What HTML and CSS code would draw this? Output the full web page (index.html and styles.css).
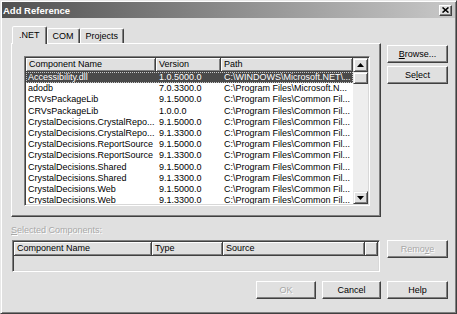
FILE: index.html
```html
<!DOCTYPE html>
<html lang="en">
<head>
  <meta charset="UTF-8">
  <title>Add Reference</title>
  <link rel="stylesheet" href="styles.css">
</head>
<body>
  <div class="window">
    <div class="titlebar">
      <span class="title">Add Reference</span>
      <div class="close">
        <svg width="7" height="6" viewBox="0 0 7 6"><path d="M0.5 0.5L6.5 5.5M6.5 0.5L0.5 5.5" stroke="#000" stroke-width="1.6"/></svg>
      </div>
    </div>

    <div class="content">
      <div class="tabs-area">
        <div class="tab-strip">
          <div class="tab active">.NET</div>
          <div class="tab">COM</div>
          <div class="tab">Projects</div>
        </div>
        <div class="tab-panel">
          <div class="listview">
            <div class="lv-main">
              <div class="lv-header">
                <div class="hcell c-name">Component Name</div>
                <div class="hcell c-ver">Version</div>
                <div class="hcell c-path">Path</div>
              </div>
              <div class="lv-row selected">
                <div class="cell c-name">Accessibility.dll</div>
                <div class="cell c-ver">1.0.5000.0</div>
                <div class="cell c-path">C:\WINDOWS\Microsoft.NET\...</div>
              </div>
              <div class="lv-row">
                <div class="cell c-name">adodb</div>
                <div class="cell c-ver">7.0.3300.0</div>
                <div class="cell c-path">C:\Program Files\Microsoft.N...</div>
              </div>
              <div class="lv-row">
                <div class="cell c-name">CRVsPackageLib</div>
                <div class="cell c-ver">9.1.5000.0</div>
                <div class="cell c-path">C:\Program Files\Common Fil...</div>
              </div>
              <div class="lv-row">
                <div class="cell c-name">CRVsPackageLib</div>
                <div class="cell c-ver">1.0.0.0</div>
                <div class="cell c-path">C:\Program Files\Common Fil...</div>
              </div>
              <div class="lv-row">
                <div class="cell c-name">CrystalDecisions.CrystalRepo...</div>
                <div class="cell c-ver">9.1.5000.0</div>
                <div class="cell c-path">C:\Program Files\Common Fil...</div>
              </div>
              <div class="lv-row">
                <div class="cell c-name">CrystalDecisions.CrystalRepo...</div>
                <div class="cell c-ver">9.1.3300.0</div>
                <div class="cell c-path">C:\Program Files\Common Fil...</div>
              </div>
              <div class="lv-row">
                <div class="cell c-name">CrystalDecisions.ReportSource</div>
                <div class="cell c-ver">9.1.5000.0</div>
                <div class="cell c-path">C:\Program Files\Common Fil...</div>
              </div>
              <div class="lv-row">
                <div class="cell c-name">CrystalDecisions.ReportSource</div>
                <div class="cell c-ver">9.1.3300.0</div>
                <div class="cell c-path">C:\Program Files\Common Fil...</div>
              </div>
              <div class="lv-row">
                <div class="cell c-name">CrystalDecisions.Shared</div>
                <div class="cell c-ver">9.1.5000.0</div>
                <div class="cell c-path">C:\Program Files\Common Fil...</div>
              </div>
              <div class="lv-row">
                <div class="cell c-name">CrystalDecisions.Shared</div>
                <div class="cell c-ver">9.1.3300.0</div>
                <div class="cell c-path">C:\Program Files\Common Fil...</div>
              </div>
              <div class="lv-row">
                <div class="cell c-name">CrystalDecisions.Web</div>
                <div class="cell c-ver">9.1.5000.0</div>
                <div class="cell c-path">C:\Program Files\Common Fil...</div>
              </div>
              <div class="lv-row">
                <div class="cell c-name">CrystalDecisions.Web</div>
                <div class="cell c-ver">9.1.3300.0</div>
                <div class="cell c-path">C:\Program Files\Common Fil...</div>
              </div>
            </div>
            <div class="scrollbar">
              <div class="sb-btn up">
                <svg width="7" height="4" viewBox="0 0 7 4"><path d="M3.5 0L7 4H0z" fill="#000"/></svg>
              </div>
              <div class="sb-thumb"></div>
              <div class="sb-track"></div>
              <div class="sb-btn down">
                <svg width="7" height="4" viewBox="0 0 7 4"><path d="M0 0H7L3.5 4z" fill="#000"/></svg>
              </div>
            </div>
          </div>
        </div>
      </div>

      <div class="side">
        <div class="btn"><u>B</u>rowse...</div>
        <div class="btn">Se<u>l</u>ect</div>
      </div>

      <div class="sel-label disabled"><u>S</u>elected Components:</div>

      <div class="sel-list">
        <div class="lv-header">
          <div class="hcell s-name">Component Name</div>
          <div class="hcell s-type">Type</div>
          <div class="hcell s-src">Source</div>
          <div class="hcell s-rest"></div>
        </div>
      </div>

      <div class="btn remove disabled">Remo<u>v</u>e</div>

      <div class="footer">
        <div class="btn ok disabled">OK</div>
        <div class="btn cancel">Cancel</div>
        <div class="btn help">Help</div>
      </div>
    </div>
  </div>
</body>
</html>
```

FILE: styles.css
```css
body {
  margin: 0;
  background: #e0e0e0;
  font-family: "Liberation Sans", Arial, sans-serif;
  font-size: 9px;
  color: #000;
}
.window {
  width: 457px;
  height: 314px;
  box-sizing: border-box;
  padding: 1px;
  background: #e0e0e0;
  border: 1px solid;
  border-color: #e8e8e8 #404040 #404040 #e8e8e8;
  box-shadow: inset 1px 1px #fff, inset -1px -1px #808080;
}
.titlebar {
  height: 16px;
  display: flex;
  align-items: center;
  justify-content: space-between;
  padding: 0 3px 0 1px;
  background: linear-gradient(to right, #505050, #c8c8c8);
  color: #fff;
  font-weight: bold;
  font-size: 9.5px;
}
.close {
  width: 13px;
  height: 11px;
  box-sizing: border-box;
  display: flex;
  align-items: center;
  justify-content: center;
  background: #e0e0e0;
  border: 1px solid;
  border-color: #fff #404040 #404040 #fff;
  box-shadow: inset -1px -1px #808080;
}
.content {
  display: grid;
  grid-template-columns: 370px 61px;
  column-gap: 6px;
  padding: 8px 0 0 9px;
}
.tab-strip {
  display: flex;
  align-items: flex-end;
  height: 17px;
  padding-left: 1px;
}
.tab {
  height: 15px;
  box-sizing: border-box;
  padding: 0 5px;
  display: flex;
  align-items: center;
  border: 1px solid;
  border-bottom: none;
  border-color: #fff #404040 transparent #fff;
  box-shadow: inset -1px 0 #808080;
  border-radius: 2px 2px 0 0;
}
.tab.active {
  height: 18px;
  margin-bottom: -1px;
  padding: 0 6px 2px;
  position: relative;
  z-index: 1;
  background: #e0e0e0;
}
.tab-panel {
  height: 174px;
  box-sizing: border-box;
  padding: 12px 10px 10px 12px;
  border: 1px solid;
  border-color: #fff #404040 #404040 #fff;
  box-shadow: inset -1px -1px #808080;
}
.listview {
  height: 150px;
  box-sizing: border-box;
  display: flex;
  padding: 1px;
  background: #fff;
  border: 1px solid;
  border-color: #808080 #fff #fff #808080;
  box-shadow: inset 1px 1px #404040, inset -1px -1px #d8d8d8;
}
.lv-main {
  flex: 1;
  overflow: hidden;
}
.lv-header {
  display: flex;
  height: 14px;
}
.hcell {
  box-sizing: border-box;
  height: 14px;
  padding-left: 3px;
  line-height: 12px;
  white-space: nowrap;
  overflow: hidden;
  background: #e0e0e0;
  border-right: 1px solid #404040;
  border-bottom: 1px solid #404040;
  box-shadow: inset 1px 1px #fff, inset -1px -1px #808080;
}
.c-name { width: 130px; }
.c-ver { width: 65px; }
.c-path { flex: 1; }
.lv-row {
  display: flex;
  height: 11.2px;
  line-height: 11px;
}
.cell {
  box-sizing: border-box;
  padding-left: 3px;
  white-space: nowrap;
  overflow: hidden;
}
.cell.c-name { padding-left: 2px; }
.lv-row.selected {
  background: #4a4a4a;
  color: #fff;
  outline: 1px dotted #c8c8c8;
  outline-offset: -1px;
}
.scrollbar {
  width: 15px;
  display: flex;
  flex-direction: column;
  background: #eeeeee;
}
.sb-btn,
.sb-thumb {
  box-sizing: border-box;
  background: #e0e0e0;
  border: 1px solid;
  border-color: #e8e8e8 #404040 #404040 #e8e8e8;
  box-shadow: inset 1px 1px #fff, inset -1px -1px #808080;
}
.sb-btn {
  height: 14px;
  display: flex;
  align-items: center;
  justify-content: center;
}
.sb-btn.down { height: 13px; }
.sb-thumb { height: 12px; }
.sb-track { flex: 1; }
.side {
  padding-top: 19px;
  display: flex;
  flex-direction: column;
  gap: 3px;
}
.btn {
  width: 61px;
  height: 18px;
  box-sizing: border-box;
  display: flex;
  align-items: center;
  justify-content: center;
  background: #e0e0e0;
  border: 1px solid;
  border-color: #fff #404040 #404040 #fff;
  box-shadow: inset -1px -1px #808080;
}
.disabled {
  color: #a8a8a8;
  text-shadow: 1px 1px #fff;
}
.sel-label {
  grid-column: 1;
  padding: 7px 0 4px 0;
  line-height: 12px;
}
.sel-list {
  grid-column: 1;
  height: 32px;
  margin: 0 1px;
  box-sizing: border-box;
  padding: 1px;
  border: 1px solid;
  border-color: #808080 #fff #fff #808080;
  box-shadow: inset 1px 1px #404040, inset -1px -1px #d8d8d8;
}
.s-name { width: 138px; }
.s-type { width: 71px; }
.s-src { width: 142px; }
.s-rest { flex: 1; }
.remove {
  grid-column: 2;
  align-self: start;
}
.footer {
  grid-column: 1 / -1;
  display: flex;
  justify-content: flex-end;
  gap: 6px;
  margin-top: 9px;
}
.footer .ok { width: 60px; }
.footer .cancel { width: 59px; }
```
